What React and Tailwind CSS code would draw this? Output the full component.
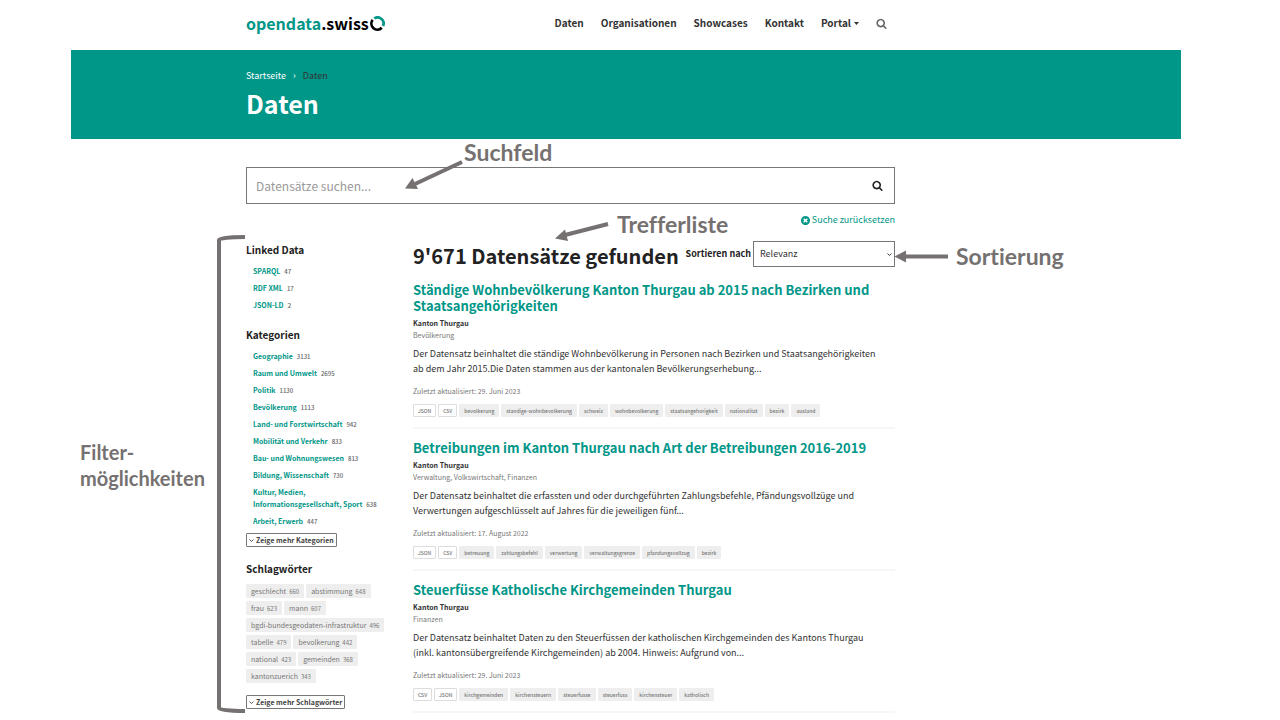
import { useState } from "react";

const linkedData = [
  { name: "SPARQL", count: 47 },
  { name: "RDF XML", count: 17 },
  { name: "JSON-LD", count: 2 },
];

const kategorien = [
  { name: "Geographie", count: 3131 },
  { name: "Raum und Umwelt", count: 2695 },
  { name: "Politik", count: 1130 },
  { name: "Bevölkerung", count: 1113 },
  { name: "Land- und Forstwirtschaft", count: 942 },
  { name: "Mobilität und Verkehr", count: 833 },
  { name: "Bau- und Wohnungswesen", count: 813 },
  { name: "Bildung, Wissenschaft", count: 730 },
  { name: "Kultur, Medien, Informationsgesellschaft, Sport", count: 638 },
  { name: "Arbeit, Erwerb", count: 447 },
];

const schlagwoerter = [
  { name: "geschlecht", count: 660 },
  { name: "abstimmung", count: 648 },
  { name: "frau", count: 623 },
  { name: "mann", count: 607 },
  { name: "bgdi-bundesgeodaten-infrastruktur", count: 496 },
  { name: "tabelle", count: 479 },
  { name: "bevolkerung", count: 442 },
  { name: "national", count: 423 },
  { name: "gemeinden", count: 368 },
  { name: "kantonzuerich", count: 343 },
];

const datasets = [
  {
    title: "Ständige Wohnbevölkerung Kanton Thurgau ab 2015 nach Bezirken und Staatsangehörigkeiten",
    org: "Kanton Thurgau",
    themen: "Bevölkerung",
    text: "Der Datensatz beinhaltet die ständige Wohnbevölkerung in Personen nach Bezirken und Staatsangehörigkeiten ab dem Jahr 2015.Die Daten stammen aus der kantonalen Bevölkerungserhebung...",
    datum: "29. Juni 2023",
    formate: ["JSON", "CSV"],
    tags: ["bevolkerung", "standige-wohnbevolkerung", "schweiz", "wohnbevolkerung", "staatsangehorigkeit", "nationalitat", "bezirk", "ausland"],
  },
  {
    title: "Betreibungen im Kanton Thurgau nach Art der Betreibungen 2016-2019",
    org: "Kanton Thurgau",
    themen: "Verwaltung, Volkswirtschaft, Finanzen",
    text: "Der Datensatz beinhaltet die erfassten und oder durchgeführten Zahlungsbefehle, Pfändungsvollzüge und Verwertungen aufgeschlüsselt auf Jahres für die jeweiligen fünf...",
    datum: "17. August 2022",
    formate: ["JSON", "CSV"],
    tags: ["betreuung", "zahlungsbefehl", "verwertung", "verwaltungsgrenze", "pfandungsvollzug", "bezirk"],
  },
  {
    title: "Steuerfüsse Katholische Kirchgemeinden Thurgau",
    org: "Kanton Thurgau",
    themen: "Finanzen",
    text: "Der Datensatz beinhaltet Daten zu den Steuerfüssen der katholischen Kirchgemeinden des Kantons Thurgau (inkl. kantonsübergreifende Kirchgemeinden) ab 2004. Hinweis: Aufgrund von...",
    datum: "29. Juni 2023",
    formate: ["CSV", "JSON"],
    tags: ["kirchgemeinden", "kirchensteuern", "steuerfusse", "steuerfuss", "kirchensteuer", "katholisch"],
  },
];

function SearchIcon({ className }) {
  return (
    <svg viewBox="0 0 1792 1792" fill="currentColor" className={className} aria-hidden="true">
      <path d="M1216 832q0-185-131.5-316.5t-316.5-131.5-316.5 131.5-131.5 316.5 131.5 316.5 316.5 131.5 316.5-131.5 131.5-316.5zm512 832q0 52-38 90t-90 38q-54 0-90-38l-343-342q-179 124-399 124-143 0-273.5-55.5t-225-150-150-225-55.5-273.5 55.5-273.5 150-225 225-150 273.5-55.5 273.5 55.5 225 150 150 225 55.5 273.5q0 220-124 399l343 343q37 37 37 90z" />
    </svg>
  );
}

function ResetIcon() {
  return (
    <svg viewBox="128 128 1536 1536" fill="currentColor" className="size-[9px]" aria-hidden="true">
      <path d="M1277 1122q0-26-19-45l-181-181 181-181q19-19 19-45 0-27-19-46l-90-90q-19-19-46-19-26 0-45 19l-181 181-181-181q-19-19-45-19-27 0-46 19l-90 90q-19 19-19 46 0 26 19 45l181 181-181 181q-19 19-19 45 0 27 19 46l90 90q19 19 46 19 26 0 45-19l181-181 181 181q19 19 45 19 27 0 46-19l90-90q19-19 19-46zm387-226q0 209-103 385.500t-279.500 279.500-385.500 103-385.500-103-279.500-279.500-103-385.500 103-385.500 279.500-279.500 385.500-103 385.500 103 279.500 279.500 103 385.500z" />
    </svg>
  );
}

function ChevronDown({ className }) {
  return (
    <svg viewBox="0 0 10 10" fill="none" stroke="currentColor" strokeWidth="1.8" className={className} aria-hidden="true">
      <path d="M1 3l4 4 4-4" />
    </svg>
  );
}

function Logo() {
  return (
    <a href="#" className="flex items-center text-[16px] leading-5 font-bold text-black">
      <span className="text-[#009688]">opendata</span>.swiss
      <svg viewBox="0 0 30 30" fill="none" strokeWidth="5.4" className="ml-px size-[15px]" aria-hidden="true">
        <path d="M8.500 4.900A12 12 0 0 1 26 20" stroke="#009688" />
        <path d="M23.500 23.500A12 12 0 0 1 5.300 7.900" stroke="#000" />
      </svg>
    </a>
  );
}

function Header() {
  return (
    <header className="flex h-[50px] w-full max-w-[649px] items-center justify-between pr-2 pb-1">
      <Logo />
      <nav className="flex items-center gap-[17px] text-[10px] leading-4 font-bold text-[#333]">
        <a href="#">Daten</a>
        <a href="#">Organisationen</a>
        <a href="#">Showcases</a>
        <a href="#">Kontakt</a>
        <a href="#" className="flex items-center gap-[3px]">
          Portal
          <svg viewBox="0 0 10 6" fill="currentColor" className="h-[3px] w-[5px]" aria-hidden="true">
            <path d="M0 0h10L5 6z" />
          </svg>
        </a>
        <button type="button" aria-label="Suche">
          <SearchIcon className="size-[11px] text-[#666]" />
        </button>
      </nav>
    </header>
  );
}

function FilterList({ title, items }) {
  return (
    <section>
      <h2 className="text-[10px] leading-4 font-bold">{title}</h2>
      <ul className="mt-[7px] flex flex-col gap-[5px] pl-[7px] text-[7px] leading-3">
        {items.map((item) => (
          <li key={item.name}>
            <a href="#" className="font-bold text-[#009688]">{item.name}</a>
            <span className="ml-1 text-[6px] leading-none font-medium text-[#666]">{item.count}</span>
          </li>
        ))}
      </ul>
    </section>
  );
}

function MoreButton({ children }) {
  return (
    <button
      type="button"
      className="flex h-[14px] items-center gap-[2px] rounded-[1px] border border-[#777] px-[2px] text-[7px] font-bold whitespace-nowrap text-[#444]"
    >
      <ChevronDown className="size-[5px]" />
      {children}
    </button>
  );
}

function Sidebar() {
  return (
    <aside>
      <FilterList title="Linked Data" items={linkedData} />
      <div className="mt-4">
        <FilterList title="Kategorien" items={kategorien} />
      </div>
      <div className="mt-[6px]">
        <MoreButton>Zeige mehr Kategorien</MoreButton>
      </div>

      <h2 className="mt-[14px] text-[10px] leading-4 font-bold">Schlagwörter</h2>
      <ul className="mt-[7px] flex flex-wrap gap-x-[2px] gap-y-[3px] text-[7px] leading-[14px] text-[#777]">
        {schlagwoerter.map((tag) => (
          <li key={tag.name}>
            <a href="#" className="block rounded-[1px] bg-[#eee] px-[5px] whitespace-nowrap">
              {tag.name}
              <span className="ml-[3px] text-[6px] leading-none">{tag.count}</span>
            </a>
          </li>
        ))}
      </ul>
      <div className="mt-3">
        <MoreButton>Zeige mehr Schlagwörter</MoreButton>
      </div>
    </aside>
  );
}

function Dataset({ item }) {
  return (
    <article className="border-b-2 border-[#f7f7f7] pb-[10px]">
      <h3 className="text-[13px] leading-4 font-bold text-[#009688]">
        <a href="#">{item.title}</a>
      </h3>
      <p className="mt-[3px] text-[7px] leading-3 font-bold text-[#333]">{item.org}</p>
      <p className="text-[7px] leading-3 text-[#777]">{item.themen}</p>
      <p className="mt-[5px] pr-3 text-[9px] leading-[15px] text-[#333]">{item.text}</p>
      <p className="mt-[9px] text-[7px] leading-3 text-[#777]">Zuletzt aktualisiert: {item.datum}</p>
      <ul className="mt-[7px] flex gap-[2px] text-[5px] leading-[11px] font-medium whitespace-nowrap text-[#777]">
        {item.formate.map((format) => (
          <li key={format} className="rounded-[1px] border border-[#ddd] px-1">{format}</li>
        ))}
        {item.tags.map((tag) => (
          <li key={tag}>
            <a href="#" className="block rounded-[1px] border border-[#eee] bg-[#eee] px-1">{tag}</a>
          </li>
        ))}
      </ul>
    </article>
  );
}

function Hinweis({ className, children }) {
  return (
    <p className={`absolute font-[Lato,sans-serif] leading-[26px] font-bold text-[#767171] [font-variant-ligatures:none] ${className}`}>
      {children}
    </p>
  );
}

// Labels and arrows that explain the parts of the page
function Hinweise() {
  return (
    <div className="pointer-events-none absolute top-0 left-0 h-[720px] w-[1280px]">
      <svg viewBox="0 0 1280 720" className="absolute inset-0 size-full" fill="none" stroke="#767171" strokeWidth="4" aria-hidden="true">
        <path d="M462 162L415 184" />
        <path d="M405 188.500L412.500 178L418 189Z" fill="#767171" stroke="none" />
        <path d="M608 224L565 235" />
        <path d="M555 238.500L565 229.500L568 241Z" fill="#767171" stroke="none" />
        <path d="M948 256.500H905" />
        <path d="M894.500 256.500L906 250.500V262.500Z" fill="#767171" stroke="none" />
        <path d="M245 237C231 237 219 238 219 240V708C219 710 231 711 245 711" />
      </svg>
      <Hinweis className="top-[139px] left-[464px] text-[23px]">Suchfeld</Hinweis>
      <Hinweis className="top-[211px] left-[617px] text-[23px]">Trefferliste</Hinweis>
      <Hinweis className="top-[243px] left-[956px] text-[23px]">Sortierung</Hinweis>
      <Hinweis className="top-[439px] left-[80px] text-[20px]">
        Filter-
        <br />
        möglichkeiten
      </Hinweis>
    </div>
  );
}

function App() {
  const [search, setSearch] = useState("");
  const [sort, setSort] = useState("Relevanz");

  return (
    <div className="relative min-h-screen overflow-hidden bg-white pr-[99px] pl-[71px] font-['Noto_Sans_CJK_SC',sans-serif] text-[#222]">
      <div className="pl-[175px]">
        <Header />
      </div>

      <div className="h-[89px] bg-[#009688] pt-[18px] pl-[175px] text-white">
        <nav className="flex gap-[7px] text-[9px] leading-4" aria-label="Breadcrumb">
          <a href="#">Startseite</a>
          <span>›</span>
          <span className="text-[#333]">Daten</span>
        </nav>
        <h1 className="mt-px text-[25px] leading-9 font-bold">Daten</h1>
      </div>

      <div className="pl-[175px]">
        <main className="w-full max-w-[649px] pt-7">
          <form onSubmit={(e) => e.preventDefault()}>
            <div className="flex h-[37px] items-center border border-[#777] pr-[11px] pl-[9px]">
              <input
                type="search"
                aria-label="Datensätze suchen"
                placeholder="Datensätze suchen..."
                value={search}
                onChange={(e) => setSearch(e.target.value)}
                className="min-w-0 flex-1 text-[12px] leading-5 outline-none placeholder:text-[#999]"
              />
              <button type="submit" aria-label="Suchen">
                <SearchIcon className="size-[11px]" />
              </button>
            </div>
            <div className="mt-2 flex justify-end">
              <button
                type="button"
                onClick={() => setSearch("")}
                className="flex items-center gap-[2px] text-[9px] leading-4 text-[#009688]"
              >
                <ResetIcon />
                Suche zurücksetzen
              </button>
            </div>
          </form>

          <div className="mt-[14px] grid grid-cols-[142px_1fr] gap-x-[25px]">
            <Sidebar />

            <div className="-mt-px">
              <div className="flex items-start justify-between">
                <h2 className="text-[20px] leading-[30px] font-bold whitespace-nowrap">9'671 Datensätze gefunden</h2>
                <div className="flex items-center gap-[2px]">
                  <label htmlFor="sort" className="text-[9px] leading-4 font-bold whitespace-nowrap">
                    Sortieren nach
                  </label>
                  <div className="relative">
                    <select
                      id="sort"
                      value={sort}
                      onChange={(e) => setSort(e.target.value)}
                      className="block h-[26px] w-[142px] appearance-none border border-[#777] pl-[6px] text-[9px] text-[#333]"
                    >
                      <option>Relevanz</option>
                      <option>Titel</option>
                      <option>Datum</option>
                    </select>
                    <ChevronDown className="absolute top-[11px] right-[3px] size-[5px]" />
                  </div>
                </div>
              </div>

              <div className="mt-[11px] flex flex-col gap-[11px]">
                {datasets.map((item) => (
                  <Dataset key={item.title} item={item} />
                ))}
              </div>
            </div>
          </div>
        </main>
      </div>

      <Hinweise />
    </div>
  );
}

export default App;
